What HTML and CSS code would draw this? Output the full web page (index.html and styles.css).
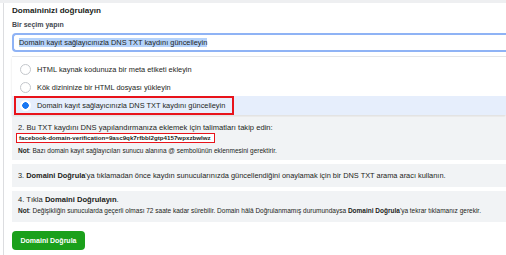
FILE: index.html
```html
<!DOCTYPE html>
<html lang="tr">
<head>
  <meta charset="utf-8" />
  <title>Domaininizi doğrulayın</title>
  <link rel="stylesheet" href="styles.css">
</head>
<body>
  <div class="topbar"></div>
  <div class="card">
    <h1>Domaininizi doğrulayın</h1>
    <div class="label">Bir seçim yapın</div>
    <div class="select"><span class="sel">Domain kayıt sağlayıcınızla DNS TXT kaydını güncelleyin</span></div>

    <ul class="menu">
      <li><span class="radio"></span>HTML kaynak kodunuza bir meta etiketi ekleyin</li>
      <li><span class="radio"></span>Kök dizininize bir HTML dosyası yükleyin</li>
      <li class="on"><div class="mark"><span class="radio"></span>Domain kayıt sağlayıcınızla DNS TXT kaydını güncelleyin</div></li>
    </ul>

    <div class="step first">
      <p>2. Bu TXT kaydını DNS yapılandırmanıza eklemek için talimatları takip edin:</p>
      <code class="code">facebook-domain-verification=9asc9qk7rfbbl2gtp4157wpxzbwlwz</code>
      <p class="note"><b>Not</b>: Bazı domain kayıt sağlayıcıları sunucu alanına @ sembolünün eklenmesini gerektirir.</p>
    </div>

    <div class="step mid">
      <p>3. <b>Domaini Doğrula</b>'ya tıklamadan önce kaydın sunucularınızda güncellendiğini onaylamak için bir DNS TXT arama aracı kullanın.</p>
    </div>

    <div class="step last">
      <p>4. Tıkla <b>Domaini Doğrulayın</b>.</p>
      <p class="note"><b>Not</b>: Değişikliğin sunucularda geçerli olması 72 saate kadar sürebilir. Domain hâlâ Doğrulanmamış durumundaysa <b>Domaini Doğrula</b>'ya tekrar tıklamanız gerekir.</p>
    </div>

    <button class="btn">Domaini Doğrula</button>
  </div>
</body>
</html>
```

FILE: styles.css
```css
*{box-sizing:border-box;margin:0;padding:0}
body{background:#fff;color:#1c1e21;font-family:'Liberation Sans',Arial,sans-serif;width:506px;height:255px;overflow:hidden;padding-left:3px}
.topbar{height:3px;background:#eeeff1;margin-left:-3px}
.card{border-left:1px solid #dcdde0;padding:3px 0 0 8px;height:252px}
h1{font-size:8.1px;font-weight:700;line-height:10px}
.label{font-size:7px;font-weight:700;line-height:10px;color:#444950;margin:4px 0 3px}
.select{height:19px;border:2px solid #8fb3f5;border-right:none;border-radius:4px 0 0 4px;padding:0 5px;font-size:7.4px;line-height:15px;white-space:nowrap}
.sel{background:#b4d2fb}
.menu{list-style:none;margin-top:4px;border-top:1px solid #e6e7e9;box-shadow:0 2px 2px rgba(0,0,0,.12);font-size:7.4px;padding-top:3px;white-space:nowrap}
.menu li{height:18px;display:flex;align-items:center;padding-left:8px}
.menu li.on{height:19px;background:#e6eefc;padding-left:2px}
.mark{display:flex;align-items:center;height:19px;width:220px;border:2px solid #e8131b;padding-left:4px}
.radio{width:11px;height:11px;border:1px solid #c4c7cc;border-radius:50%;margin-right:6px;flex:none;background:#fff}
.on .radio{border:none;background:radial-gradient(circle,#1877f2 0 3px,#fff 3.5px)}
.step{background:#f1f3f5;font-size:7.6px;line-height:11px;padding:0 6px;white-space:nowrap}
.first{margin-top:2px;padding-top:5px;padding-bottom:4px;height:43px}
.mid{margin-top:4px;padding-top:6px;height:23px;font-size:7.4px}
.last{margin-top:4px;padding-top:3px;height:31px}
.code{display:block;width:199px;height:10px;font-family:'Liberation Sans',Arial,sans-serif;font-weight:700;font-size:6.2px;line-height:7px;border:1.5px solid #e8131b;padding:0 2px;margin:0 0 3px -2px;background:#fff}
.note{font-size:6.5px;line-height:10px}
.last .note{line-height:12px}
.btn{display:block;margin-top:9px;width:73px;background:#1ba01b;color:#fff;border:none;border-radius:4px;font-family:inherit;font-weight:700;font-size:7px;height:19px;padding:0}
```
